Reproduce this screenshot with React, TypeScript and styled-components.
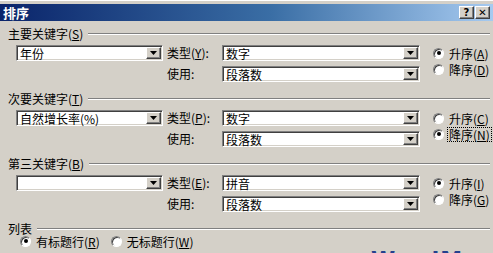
import React from "react";
import styled, { createGlobalStyle } from "styled-components";

const GlobalStyle = createGlobalStyle`
  html, body {
    margin: 0;
    padding: 0;
    background: #d4d0c8;
  }
`;

const Dialog = styled.div`
  position: relative;
  width: 493px;
  height: 253px;
  overflow: hidden;
  box-sizing: border-box;
  padding-top: 3px;
  background: #d4d0c8;
  font-family: "Noto Sans CJK SC", "DejaVu Sans", sans-serif;
  font-size: 12px;
  color: #000;
  border-top: 1px solid #fff;
`;

const TitleBar = styled.div`
  height: 17px;
  display: flex;
  align-items: center;
  padding: 0 3px;
  background: linear-gradient(to right, #0a246a, #3a6ea5 55%, #a6caf0);
`;

const TitleText = styled.span`
  flex: 1;
  color: #fff;
  font-weight: bold;
  font-size: 13px;
  line-height: 15px;
`;

const CaptionButton = styled.div`
  width: 15px;
  height: 13px;
  box-sizing: border-box;
  margin-left: 1px;
  display: flex;
  align-items: center;
  justify-content: center;
  background: #d4d0c8;
  border: 1px solid;
  border-color: #fff #404040 #404040 #fff;
  box-shadow: inset -1px -1px #808080;
  font-family: "DejaVu Sans", sans-serif;
  font-weight: bold;
  font-size: 10px;
  line-height: 11px;
`;

const Content = styled.div`
  padding: 6px 3px 0 8px;
`;

const Section = styled.div`
  margin-bottom: 10px;
`;

const Header = styled.div`
  height: 14px;
  display: flex;
  align-items: center;
  margin-bottom: 4px;
  line-height: 14px;
  white-space: nowrap;
`;

const Rule = styled.div`
  flex: 1;
  margin-left: 5px;
  border-top: 1px solid #808080;
  border-bottom: 1px solid #fff;
`;

const Mn = styled.span`
  text-decoration: underline;
`;

const KeyGrid = styled.div`
  display: grid;
  grid-template-columns: 147px 59px 198px 1fr;
  grid-template-rows: 16px 16px;
  row-gap: 5px;
  padding-left: 8px;
`;

const FieldLabel = styled.div<{ $row: number }>`
  grid-column: 2;
  grid-row: ${(p) => p.$row};
  padding-left: 4px;
  display: flex;
  align-items: center;
  line-height: 14px;
  white-space: nowrap;
`;

const ComboBox = styled.div<{ $col: number; $row: number }>`
  grid-column: ${(p) => p.$col};
  grid-row: ${(p) => p.$row};
  box-sizing: border-box;
  height: 16px;
  display: flex;
  align-items: stretch;
  padding: 1px 1px 1px 0;
  background: #fff;
  border: 1px solid;
  border-color: #808080 #fff #fff #808080;
  box-shadow: inset 1px 1px #404040, inset -1px -1px #d4d0c8;
`;

const ComboValue = styled.div`
  flex: 1;
  display: flex;
  align-items: center;
  padding-left: 3px;
  line-height: 13px;
  white-space: nowrap;
`;

const DropButton = styled.div`
  width: 15px;
  box-sizing: border-box;
  display: flex;
  align-items: center;
  justify-content: center;
  background: #d4d0c8;
  border: 1px solid;
  border-color: #fff #404040 #404040 #fff;
  box-shadow: inset -1px -1px #808080;
`;

const OrderGroup = styled.div`
  grid-column: 4;
  grid-row: 1 / span 2;
  padding-left: 13px;
  display: flex;
  flex-direction: column;
  min-width: 0;
`;

const RadioItem = styled.div`
  height: 16px;
  display: flex;
  align-items: center;
  gap: 4px;
  line-height: 13px;
  white-space: nowrap;
`;

const RadioCircle = styled.span<{ $on?: boolean }>`
  position: relative;
  flex: none;
  width: 11px;
  height: 11px;
  box-sizing: border-box;
  border-radius: 50%;
  border: 1px solid;
  border-color: #808080 #fff #fff #808080;
  box-shadow: inset 1px 1px #404040;
  background: #fff;

  &::after {
    content: "";
    display: ${(p) => (p.$on ? "block" : "none")};
    position: absolute;
    left: 2.5px;
    top: 2.5px;
    width: 4px;
    height: 4px;
    border-radius: 50%;
    background: #000;
  }
`;

const RadioText = styled.span<{ $focus?: boolean }>`
  padding: 0 1px;
  outline: ${(p) => (p.$focus ? "1px dotted #000" : "none")};
`;

const ListRow = styled.div`
  display: flex;
  gap: 10px;
  padding-left: 12px;
  margin-top: -7px;
`;

const Watermark = styled.div`
  position: absolute;
  left: 371px;
  top: 246px;
  font-family: "DejaVu Sans", sans-serif;
  font-weight: bold;
  font-size: 22px;
  line-height: 26px;
  color: #24408e;
  letter-spacing: 1px;
  white-space: nowrap;
`;

const Arrow = () => (
  <svg width="7" height="4" viewBox="0 0 7 4">
    <polygon points="0,0 7,0 3.5,4" fill="#000" />
  </svg>
);

const Combo = ({ col, row, value }: { col: number; row: number; value: string }) => (
  <ComboBox $col={col} $row={row}>
    <ComboValue>{value}</ComboValue>
    <DropButton>
      <Arrow />
    </DropButton>
  </ComboBox>
);

type Opt = { text: string; mn: string; on?: boolean; focus?: boolean };

const Radio = ({ text, mn, on, focus }: Opt) => (
  <RadioItem>
    <RadioCircle $on={on} />
    <RadioText $focus={focus}>
      {text}(<Mn>{mn}</Mn>)
    </RadioText>
  </RadioItem>
);

type KeyDef = {
  title: string;
  mn: string;
  value: string;
  typeMn: string;
  type: string;
  asc: Opt;
  desc: Opt;
};

const keys: KeyDef[] = [
  {
    title: "主要关键字",
    mn: "S",
    value: "年份",
    typeMn: "Y",
    type: "数字",
    asc: { text: "升序", mn: "A", on: true },
    desc: { text: "降序", mn: "D" },
  },
  {
    title: "次要关键字",
    mn: "T",
    value: "自然增长率(%)",
    typeMn: "P",
    type: "数字",
    asc: { text: "升序", mn: "C" },
    desc: { text: "降序", mn: "N", on: true, focus: true },
  },
  {
    title: "第三关键字",
    mn: "B",
    value: "",
    typeMn: "E",
    type: "拼音",
    asc: { text: "升序", mn: "I", on: true },
    desc: { text: "降序", mn: "G" },
  },
];

const App: React.FC = () => {
  return (
    <>
      <GlobalStyle />
      <Dialog>
        <TitleBar>
          <TitleText>排序</TitleText>
          <CaptionButton>?</CaptionButton>
          <CaptionButton>✕</CaptionButton>
        </TitleBar>
        <Content>
          {keys.map((k) => (
            <Section key={k.mn}>
              <Header>
                <span>
                  {k.title}(<Mn>{k.mn}</Mn>)
                </span>
                <Rule />
              </Header>
              <KeyGrid>
                <Combo col={1} row={1} value={k.value} />
                <FieldLabel $row={1}>
                  类型(<Mn>{k.typeMn}</Mn>):
                </FieldLabel>
                <Combo col={3} row={1} value={k.type} />
                <FieldLabel $row={2}>使用:</FieldLabel>
                <Combo col={3} row={2} value="段落数" />
                <OrderGroup>
                  <Radio {...k.asc} />
                  <Radio {...k.desc} />
                </OrderGroup>
              </KeyGrid>
            </Section>
          ))}
          <Header>
            <span>列表</span>
            <Rule />
          </Header>
          <ListRow>
            <Radio text="有标题行" mn="R" on />
            <Radio text="无标题行" mn="W" />
          </ListRow>
        </Content>
        <Watermark>WordMaster</Watermark>
      </Dialog>
    </>
  );
};

export default App;
